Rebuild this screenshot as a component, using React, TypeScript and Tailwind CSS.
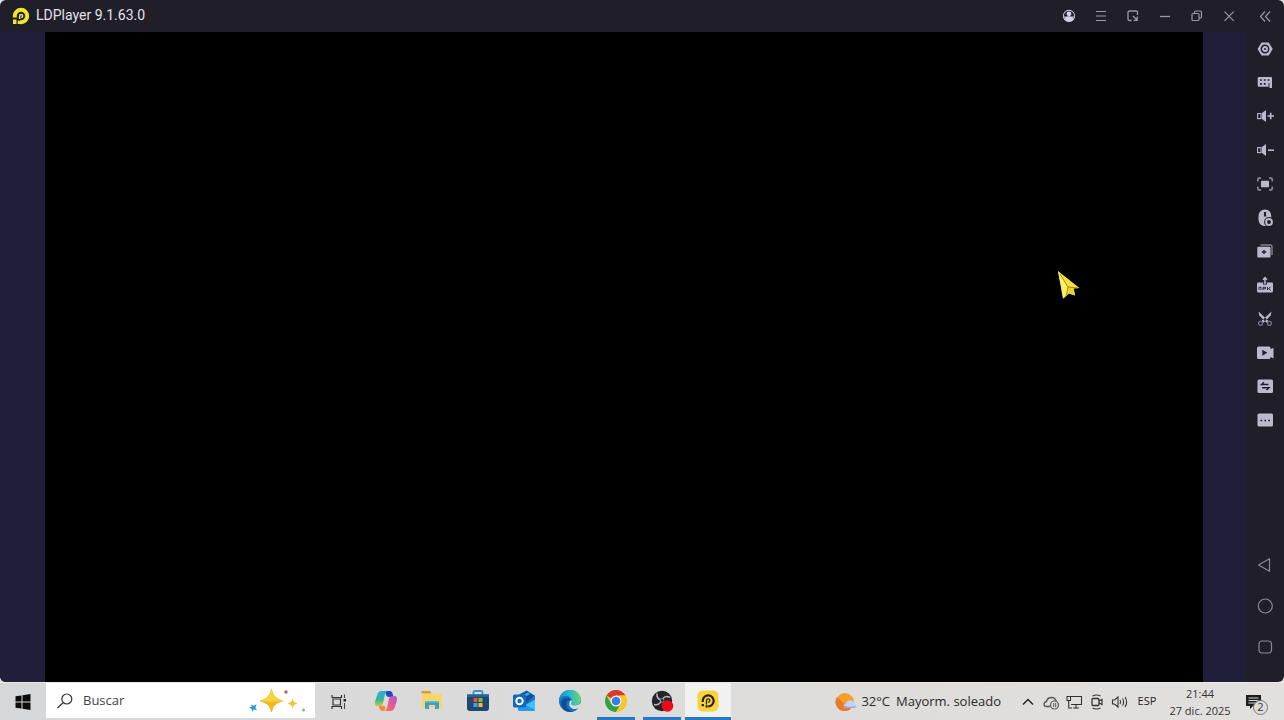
import type { ReactNode } from "react";

interface GlyphProps {
  children: ReactNode;
  size?: string;
  box?: string;
}

function Glyph({ children, size = "w-[18px] h-[18px]", box = "0 0 18 18" }: GlyphProps) {
  return (
    <svg className={`${size} shrink-0`} viewBox={box} fill="none" aria-hidden="true">
      {children}
    </svg>
  );
}

interface IconItem {
  label: string;
  icon: ReactNode;
}

const INK = "#1f1e29";
const PALE = "#bcb9ca";

const windowControls: IconItem[] = [
  {
    label: "Account",
    icon: (
      <Glyph>
        <circle cx="9" cy="9" r="5.500" stroke="#d4d2e2" strokeWidth="1.300" />
        <circle cx="9" cy="9" r="5.500" fill="#8e8c9c" />
        <path d="M4 9a5 5 0 0 1 10 0l-2.500.5h-5z" fill={INK} />
        <circle cx="9" cy="6.800" r="2.400" fill="#d4d2e2" />
        <path d="M4.300 12c.7-2 2.400-2.800 4.700-2.800s4 .8 4.700 2.800Q12 14.500 9 14.500T4.300 12z" fill="#d4d2e2" />
      </Glyph>
    ),
  },
  {
    label: "Menu",
    icon: (
      <Glyph>
        <path d="M4 4.500h10M4 9h10M4 13.500h10" stroke="#9a98a8" strokeWidth="1.200" />
      </Glyph>
    ),
  },
  {
    label: "Mini window",
    icon: (
      <Glyph>
        <path d="M7.500 13.500H5.500Q4 13.500 4 12V5.500Q4 4 5.500 4h6.500Q13.500 4 13.500 5.500V8" stroke="#9a98a8" strokeWidth="1.300" />
        <path d="M9 9l3.500 3.500M13.200 9.500v3.800H9.500" stroke="#9a98a8" strokeWidth="1.300" />
      </Glyph>
    ),
  },
  {
    label: "Minimize",
    icon: (
      <Glyph>
        <path d="M4 9.500h10" stroke="#9a98a8" strokeWidth="1.300" />
      </Glyph>
    ),
  },
  {
    label: "Restore",
    icon: (
      <Glyph>
        <rect x="4" y="6.500" width="7" height="7" rx="1" stroke="#9a98a8" strokeWidth="1.200" />
        <path d="M6.500 6.500V5q0-1 1-1H12.500q1 0 1 1v5q0 1-1 1H11" stroke="#9a98a8" strokeWidth="1.200" />
      </Glyph>
    ),
  },
  {
    label: "Close",
    icon: (
      <Glyph>
        <path d="M4.500 4.700l9.200 9.200M13.700 4.700l-9.200 9.200" stroke="#9a98a8" strokeWidth="1.200" />
      </Glyph>
    ),
  },
];

const tools: IconItem[] = [
  {
    label: "Settings",
    icon: (
      <Glyph>
        <path d="M5.500 2.500h7.200L16.700 9l-4 6.500H5.500L1.500 9z" fill={PALE} />
        <circle cx="9" cy="9" r="3.700" stroke={INK} strokeWidth="1.500" />
        <circle cx="9" cy="9" r="1" fill={INK} />
      </Glyph>
    ),
  },
  {
    label: "Keyboard mapping",
    icon: (
      <Glyph>
        <path d="M3 3h12q1 0 1 1v10h-3v-1.300H3q-1.300 0-1.300-1.300V4.300Q1.700 3 3 3z" fill={PALE} />
        <path d="M4 6h1.800M7.800 6h1.800M11.600 6h1.800M4 9.800h1.800M7.800 9.800h1.800" stroke={INK} strokeWidth="1.700" />
        <path d="M13 9v5" stroke={INK} strokeWidth=".9" />
      </Glyph>
    ),
  },
  {
    label: "Volume up",
    icon: (
      <Glyph>
        <rect x="1.600" y="6.600" width="3.400" height="5" stroke={PALE} strokeWidth="1.100" />
        <path d="M6 6l4-3v12l-4-3z" fill={PALE} />
        <path d="M11.500 9h6.500M14.700 5.800v6.400" stroke={PALE} strokeWidth="1.600" />
      </Glyph>
    ),
  },
  {
    label: "Volume down",
    icon: (
      <Glyph>
        <rect x="1.600" y="6.600" width="3.400" height="5" stroke={PALE} strokeWidth="1.100" />
        <path d="M6 6l4-3v12l-4-3z" fill={PALE} />
        <path d="M12 9.200h6" stroke={PALE} strokeWidth="1.600" />
      </Glyph>
    ),
  },
  {
    label: "Full screen",
    icon: (
      <Glyph>
        <rect x="5" y="5.700" width="8" height="6.600" rx=".5" fill={PALE} />
        <path d="M1.800 6.500V4.500Q1.800 3 3.300 3H5M13 3h1.700q1.500 0 1.500 1.500v2M16.200 11.500v2q0 1.500-1.500 1.500H13M5 15H3.300q-1.500 0-1.500-1.500v-2" stroke="#9694a6" strokeWidth="1.500" />
      </Glyph>
    ),
  },
  {
    label: "Virtual location",
    icon: (
      <Glyph>
        <path d="M9 .5c4 0 6.200 3 6.200 6.500v5c0 3-2.500 5-6.200 5S2.500 14.500 2.500 10V7C2.500 3.500 5 .5 9 .5z" fill={PALE} />
        <path d="M9 3v4.500" stroke={INK} strokeWidth="2.200" />
        <circle cx="13" cy="13" r="4.900" fill={INK} />
        <circle cx="13" cy="13" r="2.900" stroke={PALE} strokeWidth="2" />
      </Glyph>
    ),
  },
  {
    label: "Multi instance",
    icon: (
      <Glyph>
        <path d="M4.500 3H14q2 0 2 2v8" stroke="#858294" strokeWidth="1.400" />
        <rect x="1.300" y="4.800" width="13.200" height="10.700" rx="1" fill={PALE} />
        <path d="M8 8v4M5.800 10h4.400" stroke={INK} strokeWidth="1.300" />
      </Glyph>
    ),
  },
  {
    label: "Install APK",
    icon: (
      <Glyph>
        <path d="M2 6.500h14q1 0 1 1v7.500q0 1.500-1.500 1.500h-13Q1 16.500 1 15V7.500q0-1 1-1z" fill={PALE} />
        <path d="M7 6.500h4v2H7z" fill={INK} />
        <path d="M9 8V2M7 3.700L9 1.500l2 2.200" stroke={PALE} strokeWidth="1.500" />
        <path d="M3 14v-2.700h2V14M7 14v-2.700h2.500v1.500H7M11.500 11v3M14.500 11.200l-2 1.500 2 1.500" stroke={INK} strokeWidth=".9" />
      </Glyph>
    ),
  },
  {
    label: "Cut",
    icon: (
      <Glyph>
        <path d="M2.500 1.500l10 9.500-2 1.800L3.300 5.500zM15.500 1.500l-10 9.500 2 1.800 7.200-7.300z" fill={PALE} />
        <circle cx="4.500" cy="13.300" r="2" stroke="#777485" strokeWidth="1.300" />
        <circle cx="13.500" cy="13.300" r="2" stroke="#777485" strokeWidth="1.300" />
      </Glyph>
    ),
  },
  {
    label: "Record",
    icon: (
      <Glyph>
        <path d="M2.500 2.500H13q1.500 0 1.500 1.500v1L17.500 4v10.500l-3-1.500v.5Q14.500 15 13 15H2.500Q1 15 1 13.500V4Q1 2.500 2.500 2.500z" fill={PALE} />
        <path d="M6.300 5.800l5 3-5 3z" fill={INK} />
      </Glyph>
    ),
  },
  {
    label: "Synchronizer",
    icon: (
      <Glyph>
        <rect x="1.500" y="2.500" width="15.500" height="13.500" rx="1.500" fill={PALE} />
        <path d="M12.500 7.500h-7L8 5.300M6 10.800h7L10.500 13" stroke={INK} strokeWidth="1.400" />
      </Glyph>
    ),
  },
  {
    label: "More",
    icon: (
      <Glyph>
        <rect x="1.500" y="2.500" width="15.500" height="13" rx="1.500" fill={PALE} />
        <path d="M4.500 9.500h1.700M8.400 9.500h1.700M12.300 9.500H14" stroke={INK} strokeWidth="1.700" />
      </Glyph>
    ),
  },
];

const navigation: IconItem[] = [
  {
    label: "Back",
    icon: (
      <Glyph>
        <path d="M13.500 2.700v12.600L2.500 9z" stroke="#8b8998" strokeWidth="1.200" strokeLinejoin="round" />
      </Glyph>
    ),
  },
  {
    label: "Home",
    icon: (
      <Glyph>
        <circle cx="9.300" cy="9" r="7" stroke="#8b8998" strokeWidth="1.200" />
      </Glyph>
    ),
  },
  {
    label: "Recent apps",
    icon: (
      <Glyph>
        <rect x="3" y="3" width="12.500" height="12" rx="3" stroke="#8b8998" strokeWidth="1.200" />
      </Glyph>
    ),
  },
];

interface TaskbarApp extends IconItem {
  state?: "running" | "active";
}

const apps: TaskbarApp[] = [
  {
    label: "Copilot",
    icon: (
      <Glyph size="w-6 h-6" box="0 0 24 24">
        <defs>
          <linearGradient id="cop-a" x1="0" y1="0" x2="0" y2="1">
            <stop stopColor="#29a6f0" />
            <stop offset=".6" stopColor="#38b98c" />
            <stop offset="1" stopColor="#d8c43b" />
          </linearGradient>
          <linearGradient id="cop-b" x1="1" y1="0" x2="0" y2="1">
            <stop stopColor="#a35de0" />
            <stop offset=".5" stopColor="#e8569a" />
            <stop offset="1" stopColor="#f5803e" />
          </linearGradient>
        </defs>
        <path d="M11 2h4.500c2 0 2.700 1.300 3.200 3l.8 3H15c-2 0-2.800-1.500-3.200-3z" fill="#2448b8" />
        <path d="M7.500 2H14c-2 .3-2.700 2-3.200 4l-1.500 7c-.6 3-2 4-4 4H3.500C1 17 .6 14.500 1.200 12L3.500 5c.8-2 2-3 4-3z" fill="url(#cop-a)" />
        <path d="M16.500 22H10c2-.3 2.700-2 3.200-4l1.500-7c.6-3 2-4 4-4h1.800c2.500 0 2.900 2.500 2.300 5l-2.300 7c-.8 2-2 3-4 3z" fill="url(#cop-b)" />
        <path d="M4.500 16.800H9c2 0 2.600 1 2.200 3-.3 1.400-1 2.200-2.700 2.200-2.500 0-3-2.500-4-5.200z" fill="#ef8c32" />
      </Glyph>
    ),
  },
  {
    label: "Explorador de archivos",
    icon: (
      <Glyph size="w-6 h-6" box="0 0 24 24">
        <path d="M1.500 3q0-1 1-1H10l1.500 2.500h-10z" fill="#dc9826" />
        <path d="M2 4.800h19q1 0 1 1V18q0 1-1 1H3q-1 0-1-1z" fill="#f9d667" />
        <path d="M5 12h14v8h-4v-4H9v4H5z" fill="#3d9ed0" />
        <path d="M5 12h14v1.500H5z" fill="#5bbce4" />
      </Glyph>
    ),
  },
  {
    label: "Microsoft Store",
    icon: (
      <Glyph size="w-6 h-6" box="0 0 24 24">
        <path d="M7.500 6V3.500q0-1.500 1.500-1.500h6q1.500 0 1.500 1.500V6" stroke="#3597d4" strokeWidth="1.800" />
        <path d="M1 5.500h22V19q0 3-3 3H4q-3 0-3-3z" fill="#1f4771" />
        <path d="M1 5.500h22V8H1z" fill="#286499" />
        <path d="M7.500 9h4v4h-4z" fill="#ed542d" />
        <path d="M12.500 9h4v4h-4z" fill="#7fbe30" />
        <path d="M7.500 14h4v4h-4z" fill="#38a8ec" />
        <path d="M12.500 14h4v4h-4z" fill="#fbbd22" />
      </Glyph>
    ),
  },
  {
    label: "Outlook",
    icon: (
      <Glyph size="w-6 h-6" box="0 0 24 24">
        <path d="M6 6l8.500-4.500L23 6.500V20q0 2-2 2H8q-2 0-2-2z" fill="#1a74ca" />
        <path d="M8 6l7-4 7 5-8 7z" fill="#0f50a0" />
        <path d="M9 7l7-3.500 2 1.300L9.500 10z" fill="#49aaf0" />
        <path d="M7 20l16-9.500V20q0 2-2 2H9q-2 0-2-2z" fill="#42c3f5" />
        <path d="M7 12l16 9q-.7 1-2 1H8q-2 0-2-2z" fill="#279be6" />
        <rect x="1" y="5.500" width="13" height="13" rx="1.500" fill="#1269be" />
        <circle cx="7.500" cy="12" r="3.200" stroke="#fff" strokeWidth="2" />
      </Glyph>
    ),
  },
  {
    label: "Microsoft Edge",
    icon: (
      <Glyph size="w-6 h-6" box="0 0 24 24">
        <defs>
          <linearGradient id="edge-top" x1="0" y1=".5" x2="1" y2=".5">
            <stop stopColor="#1689d5" />
            <stop offset=".5" stopColor="#2cb9d0" />
            <stop offset="1" stopColor="#69d768" />
          </linearGradient>
        </defs>
        <circle cx="12" cy="12" r="11" fill="#1674c5" />
        <path d="M1 11.500C1.500 5.500 6 1 12 1c6.500 0 11 4.500 11 9.500 0 4-3 6-6.500 6-2.300 0-3.500-.8-3.500-1.700 0-.8 1-1.300 1-2.800C14 9 11 7 8 7c-3.500 0-6 2-7 4.500z" fill="url(#edge-top)" />
        <path d="M9 12.500c-2 4 1 10 7 9.700C9 24.500 3 20 3 14.500c0-3.500 2.500-5.500 5.500-5.500 3 0 4.700 1.500 4.700 3-.8-.8-3.400-1-4.200.500z" fill="#144d96" />
        <path d="M13.800 11.500c.5 1.800-.8 2.200-.8 3.300 0 1 1.300 1.700 3.500 1.700 2.300 0 4.500-.8 5.800-2.200.9-.8 1.700 0 1.200 1.200C22 19 19 20.500 16 20c-4-.5-5.500-4-4.500-7 .500-1.200 1.500-2 2.300-1.500z" fill="#dadada" />
      </Glyph>
    ),
  },
  {
    label: "Google Chrome",
    state: "running",
    icon: (
      <Glyph size="w-6 h-6" box="0 0 24 24">
        <circle cx="12" cy="12" r="11" fill="#f7c52d" />
        <path d="M12 12L2.500 6.500A11 11 0 0 1 21.500 6.500H12z" fill="#d93a2f" />
        <path d="M2.500 6.500A11 11 0 0 0 12 23l4.800-8.300L12 12 7.200 14.700z" fill="#2d9f4e" />
        <path d="M21.500 6.500A11 11 0 0 1 12 23l4.800-8.300L16 6.500z" fill="#f7c52d" />
        <circle cx="12" cy="12" r="5.500" fill="#f5f5f5" />
        <circle cx="12" cy="12" r="4.300" fill="#377de8" />
      </Glyph>
    ),
  },
  {
    label: "OBS Studio",
    state: "running",
    icon: (
      <Glyph size="w-6 h-6" box="0 0 24 24">
        <circle cx="12" cy="12" r="10.200" fill="#242328" />
        <path d="M7 4.500c-.5 3 .8 5.500 4 6.500M20 8.500c-2.500-1.500-5.500-1.200-7.500 1.500M4 15.500c2.800.7 5.800-.5 7-3.500" stroke="#b8b8bc" strokeWidth="1.500" />
        <circle cx="12" cy="11.500" r="2" stroke="#8b8b90" strokeWidth=".8" />
        <circle cx="17.500" cy="17" r="5.800" fill="#eb0a15" />
      </Glyph>
    ),
  },
  {
    label: "LDPlayer",
    state: "active",
    icon: (
      <Glyph size="w-6 h-6" box="0 0 24 24">
        <rect x="1.500" y="1.500" width="21" height="21" rx="5" fill="#f8d33d" />
        <path d="M6.700 13v-1.200a5.500 5.500 0 1 1 5.500 5.500" stroke="#29230e" strokeWidth="2.200" />
        <path d="M10.500 15.500v-4a1.700 1.700 0 1 1 1.700 1.700" stroke="#29230e" strokeWidth="1.300" />
        <path d="M5.600 15h2.300v2.300H5.600zM9.500 16.300h2.200v2.200H9.500z" fill="#29230e" />
      </Glyph>
    ),
  },
];

function TitleBar() {
  return (
    <header className="flex h-8 shrink-0 items-center">
      <div className="flex flex-1 items-center gap-1.5 pl-3">
        <Glyph>
          <path d="M2.800 10.500V9a6.200 6.200 0 1 1 6.200 6.200H8" stroke="#f0e72d" strokeWidth="4" />
          <path d="M7.600 12V9a1.500 1.500 0 1 1 1.500 1.500" stroke="#f0e72d" strokeWidth="1.500" />
          <path d="M1 12.500h3.500V17H1zM5.700 13.700H8V17H5.700z" fill="#f0e72d" />
        </Glyph>
        <h1 className="pb-0.5 font-['Roboto',sans-serif] text-sm text-[#e3e1ea]">LDPlayer 9.1.63.0</h1>
      </div>
      {windowControls.map((item) => (
        <button key={item.label} aria-label={item.label} className="flex h-8 w-8 items-center justify-center">
          {item.icon}
        </button>
      ))}
      <button aria-label="Collapse sidebar" className="flex h-8 w-[39px] items-center justify-center">
        <Glyph>
          <path d="M9 4.500L4.500 9.500 9 14.500M14 4.500L9.500 9.500l4.500 5" stroke="#9a98a8" strokeWidth="1.200" />
        </Glyph>
      </button>
    </header>
  );
}

function Sidebar() {
  return (
    <aside className="flex w-[39px] shrink-0 flex-col justify-between pb-[15px]">
      <div className="grid h-[405px] grid-rows-12">
        {tools.map((item) => (
          <button key={item.label} aria-label={item.label} className="flex items-center justify-center">
            {item.icon}
          </button>
        ))}
      </div>
      <nav className="flex flex-col">
        {navigation.map((item) => (
          <button key={item.label} aria-label={item.label} className="flex h-[41px] items-center justify-center">
            {item.icon}
          </button>
        ))}
      </nav>
    </aside>
  );
}

function Pointer() {
  return (
    <svg className="absolute top-[239px] right-[123px] h-7 w-[22px]" viewBox="0 0 22 28" aria-hidden="true">
      <path d="M0 0l21.500 17-6 .5 1.500 7-6-2-5.500 5z" fill="#f3e43a" />
      <path d="M0 0l10.500 16L5 28z" fill="#fbee6a" />
      <path d="M9.500 16.500l6-.5 1.500 8.500-6-2z" fill="#e6d233" />
      <path d="M2 3l8 13 10 1M10 16l-1.500 8" fill="none" stroke="#9a8519" strokeWidth=".9" />
    </svg>
  );
}

function SearchBox() {
  return (
    <label className="ml-px flex h-[35px] w-[269px] items-center bg-white pl-2.5">
      <Glyph>
        <circle cx="10.800" cy="7" r="5" stroke="#333" strokeWidth="1.200" />
        <path d="M7 10.800L1.500 16" stroke="#333" strokeWidth="1.300" />
      </Glyph>
      <input
        type="text"
        aria-label="Buscar"
        placeholder="Buscar"
        className="ml-[9px] min-w-0 flex-1 text-[13px] text-[#333] placeholder:text-[#444] focus:outline-none"
      />
      <Glyph size="w-[58px] h-[26px] mr-2" box="0 0 58 26">
        <path d="M22.500 1.500c1.500 6.500 4 9 11 11.500-7 2-9.500 4.500-11 11-1.500-6.500-4-9-11-11 7-2.500 9.500-5 11-11.500z" fill="#f2b81c" stroke="#f2b81c" strokeWidth="1" strokeLinejoin="round" />
        <path d="M22.500 1.500c1.500 6.500 4 9 11 11.500l-11 1-11-1c7-2.500 9.500-5 11-11.500z" fill="#fbd23e" />
        <path d="M43.500 10.500c.7 3 1.800 4.300 5 5-3.200.8-4.300 2-5 5-.7-3-1.800-4.200-5-5 3.200-.7 4.300-2 5-5z" fill="#f5c432" />
        <path d="M2 16.500l2.500 1.200 3-1.500-1 3.300 1.300 2.500-3-.5L3 24l-.3-3L0 19.500l2.500-.7z" fill="#329cd1" />
        <circle cx="37" cy="4" r="1.700" fill="#b46472" />
        <circle cx="54.500" cy="22" r="1.500" fill="#80b87c" />
      </Glyph>
    </label>
  );
}

function AppButton({ app }: { app: TaskbarApp }) {
  return (
    <button
      aria-label={app.label}
      className={`flex w-[46px] flex-col items-center ${app.state === "active" ? "bg-[#f1f1f1]" : ""}`}
    >
      <span className="flex flex-1 items-center pt-0.5">{app.icon}</span>
      {app.state && (
        <span className={`h-[3px] bg-[#2878c8] ${app.state === "active" ? "w-full" : "w-[38px]"}`} />
      )}
      {!app.state && <span className="h-[3px]" />}
    </button>
  );
}

function SystemTray() {
  return (
    <div className="flex items-center">
      <button className="mr-4 flex items-center gap-1 text-[13px] whitespace-nowrap text-[#2a2a2a]">
        <Glyph size="w-[22px] h-[22px]" box="0 0 22 22">
          <circle cx="10" cy="11" r="9" fill="#f3a02e" />
          <path d="M2 6a9 9 0 0 0 8 14c2 0 4-.6 5.500-1.800z" fill="#e9792b" />
          <path d="M11 17q-2.500-.3-2.500-2.300T11 12.500q1-3.300 4-3.300t4 3q2.500.3 2.500 2.500T19 17z" fill="#c5d1f5" />
          <path d="M8.500 14.700q0 2.300 2.500 2.300h8q2 0 2.500-2-6 1.500-13-.3z" fill="#99a8de" />
        </Glyph>
        <span>32°C</span>
        <span className="ml-0.5">Mayorm. soleado</span>
      </button>
      <button aria-label="Mostrar iconos ocultos" className="flex w-[22px] justify-center">
        <Glyph>
          <path d="M4 11.500l5-5 5 5" stroke="#222" strokeWidth="1.400" />
        </Glyph>
      </button>
      <button aria-label="OneDrive" className="flex w-[23px] justify-center">
        <Glyph>
          <path d="M8 13.500H4.500Q2 13.300 2 11.200T4.500 8.500Q5.500 4.500 9.500 4.500q3.500 0 4.700 3.500" stroke="#555" strokeWidth="1.300" />
          <circle cx="12.500" cy="12" r="4" stroke="#555" strokeWidth="1.200" />
          <path d="M11.700 10v4M13.700 10v4" stroke="#555" strokeWidth="1" />
        </Glyph>
      </button>
      <button aria-label="Red" className="flex w-[23px] justify-center">
        <Glyph>
          <path d="M6 3.500h10.500v8H6M11 11.500V15M8 15h6" stroke="#333" strokeWidth="1.100" />
          <path d="M2 3.500h3.500v4H2zM3.700 7.500V15H7" stroke="#333" strokeWidth="1.100" />
        </Glyph>
      </button>
      <button aria-label="Reunirse ahora" className="flex w-[23px] justify-center">
        <Glyph>
          <rect x="4" y="5.500" width="7" height="7" rx="1" stroke="#333" strokeWidth="1.300" />
          <path d="M11 8l3-1.500v5l-3-1.500M4.500 3Q8.500 1 12.500 3M4.500 15q4 2 8 0" stroke="#333" strokeWidth="1.200" />
        </Glyph>
      </button>
      <button aria-label="Volumen" className="flex w-[23px] justify-center">
        <Glyph>
          <path d="M1.500 7h2L7 4v10l-3.500-3h-2z" stroke="#333" strokeWidth="1.100" />
          <path d="M9 7q1.200 2 0 4M11.500 5.500q2.200 3.500 0 7M14 4q3.300 5 0 10" stroke="#333" strokeWidth="1.100" />
        </Glyph>
      </button>
      <button className="w-8 text-center text-[11px] text-[#222]">ESP</button>
      <button className="w-[74px] text-center text-[11px] leading-[17px] whitespace-nowrap text-[#333]">
        <time dateTime="2025-12-27T21:44">
          <span className="block">21:44</span>
          <span className="block">27 dic. 2025</span>
        </time>
      </button>
      <button aria-label="Notificaciones" className="relative flex w-[47px] items-center pl-2">
        <Glyph>
          <path d="M1 2h15v11H8l-3 3v-3H1z" fill="#1c1c1c" />
          <path d="M3.500 5h10M3.500 7.500h10M3.500 10h7" stroke="#d8d8d8" strokeWidth="1" />
        </Glyph>
        <span className="absolute top-[7px] left-4 flex h-[15px] w-[15px] items-center justify-center rounded-full border border-[#777] bg-[#dededd] text-[11px] text-[#333]">
          2
        </span>
      </button>
    </div>
  );
}

function Taskbar() {
  return (
    <footer className="flex h-[38px] shrink-0 items-stretch border-t border-[#e8e8e8] bg-linear-to-r from-[#d6d7d8] to-[#e2e0de] font-['Open_Sans','Noto_Sans',sans-serif]">
      <button aria-label="Inicio" className="flex w-[45px] items-center justify-center">
        <Glyph>
          <path d="M1.500 3.200l6-.800V8.500h-6zM8.500 2.200l8-1.100V8.500h-8zM1.500 9.500h6v6.100l-6-.800zM8.500 9.500h8v7.400l-8-1.100z" fill="#0c0c0c" />
        </Glyph>
      </button>
      <SearchBox />
      <button aria-label="Vista de tareas" className="flex w-12 items-center justify-center">
        <Glyph>
          <path d="M2 2v2.500h9.500V2M2 16v-2.500h9.500V16M3 6h7.500v6H3z" stroke="#333" strokeWidth="1.200" />
          <path d="M14.500 1.500v3.500M14.500 10v6" stroke="#444" strokeWidth="1.100" />
          <path d="M13.500 6h2.500v2.500h-2.500z" fill="#222" />
        </Glyph>
      </button>
      {apps.map((app) => (
        <AppButton key={app.label} app={app} />
      ))}
      <div className="flex-1" />
      <SystemTray />
    </footer>
  );
}

export default function App() {
  return (
    <div className="flex h-screen flex-col overflow-hidden bg-[#dedede]">
      <div className="flex min-h-0 flex-1 flex-col overflow-hidden rounded-md bg-[#1f1e29]">
        <TitleBar />
        <div className="flex min-h-0 flex-1">
          <div className="w-[45px] shrink-0 bg-[#211e3c]" />
          <main className="relative flex-1 bg-black">
            <Pointer />
          </main>
          <div className="w-[42px] shrink-0 bg-[#211e3c]" />
          <Sidebar />
        </div>
      </div>
      <Taskbar />
    </div>
  );
}
